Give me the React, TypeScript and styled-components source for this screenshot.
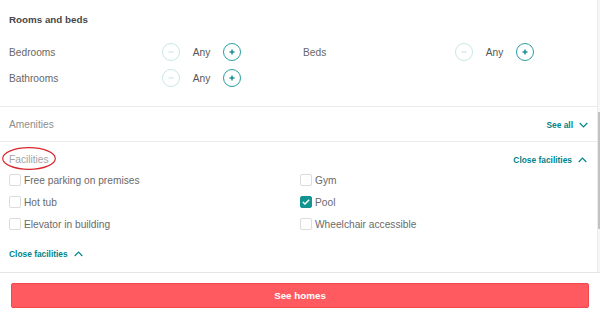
import React from "react";
import styled, { createGlobalStyle } from "styled-components";

const Global = createGlobalStyle`
  html, body { margin: 0; padding: 0; background: #fff; }
  body { font-family: "Liberation Sans", Arial, sans-serif; }
  * { box-sizing: border-box; }
`;

const TEAL = "#008489";

const Page = styled.div`
  width: 600px;
  height: 312px;
  display: flex;
  flex-direction: column;
  overflow: hidden;
  background: #fff;
`;

const ScrollArea = styled.div`
  display: flex;
  height: 272px;
  flex: 0 0 272px;
`;

const Content = styled.div`
  flex: 1;
  display: flex;
  flex-direction: column;
`;

const Track = styled.div`
  width: 5px;
  flex: 0 0 5px;
  background: #f6f6f6;
  border-left: 1px solid #ececec;
  display: flex;
  flex-direction: column;
`;

const Thumb = styled.div`
  margin-top: 112px;
  height: 117px;
  width: 4px;
  background: #c2c2c2;
`;

const RoomsSection = styled.section`
  height: 107px;
  padding: 12px 0 0 9px;
  border-bottom: 1px solid #ebebeb;
`;

const Title = styled.h2`
  margin: 0;
  font-size: 9.8px;
  font-weight: 700;
  line-height: 16px;
  color: #484848;
`;

const Rows = styled.div`
  margin-top: 11px;
  display: flex;
  flex-direction: column;
`;

const Row = styled.div`
  height: 26px;
  display: flex;
  align-items: center;
`;

const Group = styled.div<{ $w?: number }>`
  display: flex;
  align-items: center;
  width: ${(p) => p.$w ?? 294}px;
`;

const Label = styled.span<{ $w: number }>`
  width: ${(p) => p.$w}px;
  font-size: 10.2px;
  color: #676767;
  padding-top: 1px;
`;

const Circle = styled.span<{ $active?: boolean }>`
  width: 18px;
  height: 18px;
  border-radius: 50%;
  border: 1.2px solid ${(p) => (p.$active ? "#2a9ea0" : "#c9e6e6")};
  display: flex;
  align-items: center;
  justify-content: center;
  color: ${(p) => (p.$active ? TEAL : "#c3e2e2")};
`;

const Value = styled.span`
  width: 43px;
  text-align: center;
  font-size: 10.2px;
  color: #555;
  padding-top: 1px;
`;

const AmenitiesSection = styled.section`
  height: 35px;
  padding: 2px 9px 0 9px;
  border-bottom: 1px solid #ebebeb;
  display: flex;
  align-items: center;
  justify-content: space-between;
`;

const SectionName = styled.span<{ $light?: boolean }>`
  font-size: 10.2px;
  line-height: 16px;
  color: ${(p) => (p.$light ? "#a4a4a4" : "#8e8e8e")};
`;

const Link = styled.a`
  display: inline-flex;
  align-items: center;
  gap: 6px;
  font-size: 8.4px;
  font-weight: 700;
  color: ${TEAL};
  text-decoration: none;
  line-height: 14px;
`;

const FacilitiesSection = styled.section`
  flex: 1;
  padding: 10px 10px 0 9px;
`;

const FacHeader = styled.div`
  position: relative;
  height: 16px;
  display: flex;
  align-items: center;
  justify-content: space-between;
`;

const Ellipse = styled.svg`
  position: absolute;
  left: -7px;
  top: -5px;
  overflow: visible;
`;

const Items = styled.div`
  margin-top: 1px;
  display: grid;
  grid-template-columns: 291px 1fr;
  grid-auto-rows: 22px;
`;

const Item = styled.label`
  display: flex;
  align-items: center;
  font-size: 10.2px;
  color: #6a6a6a;
`;

const Box = styled.span<{ $checked?: boolean }>`
  width: 12px;
  height: 12px;
  margin-right: 3px;
  border-radius: 2px;
  border: 1px solid ${(p) => (p.$checked ? "#139490" : "#dcdcdc")};
  background: ${(p) => (p.$checked ? "#139490" : "#fff")};
  display: flex;
  align-items: center;
  justify-content: center;
`;

const BottomLink = styled.div`
  margin-top: 12px;
  display: flex;
`;

const Footer = styled.footer`
  flex: 1;
  border-top: 1px solid #e6e6e6;
  padding: 10px 11px 0 11px;
`;

const Button = styled.button`
  width: 100%;
  height: 25px;
  border-radius: 2px;
  border: 1px solid #f2474d;
  background: #ff5a5f;
  color: #fff;
  font-family: "Liberation Sans", Arial, sans-serif;
  font-weight: 700;
  font-size: 9.8px;
  display: flex;
  align-items: center;
  justify-content: center;
  padding: 0;
`;

const Minus = () => (
  <svg width="6" height="2" viewBox="0 0 6 2">
    <line x1="0.5" y1="1" x2="5.5" y2="1" stroke="currentColor" strokeWidth="1" />
  </svg>
);

const Plus = () => (
  <svg width="6" height="6" viewBox="0 0 6 6">
    <line x1="0.5" y1="3" x2="5.5" y2="3" stroke="currentColor" strokeWidth="1.3" />
    <line x1="3" y1="0.5" x2="3" y2="5.5" stroke="currentColor" strokeWidth="1.3" />
  </svg>
);

const Chevron = ({ up }: { up?: boolean }) => (
  <svg width="9" height="6" viewBox="0 0 9 6">
    <polyline
      points={up ? "0.7,5 4.5,1.2 8.3,5" : "0.7,1 4.5,4.8 8.3,1"}
      fill="none"
      stroke={TEAL}
      strokeWidth="1.2"
    />
  </svg>
);

const Check = () => (
  <svg width="8" height="6" viewBox="0 0 8 6">
    <polyline points="0.8,3 3,5 7.2,0.8" fill="none" stroke="#fff" strokeWidth="1.4" />
  </svg>
);

const Counter = () => (
  <>
    <Circle>
      <Minus />
    </Circle>
    <Value>Any</Value>
    <Circle $active>
      <Plus />
    </Circle>
  </>
);

const facilities: [string, boolean][] = [
  ["Free parking on premises", false],
  ["Gym", false],
  ["Hot tub", false],
  ["Pool", true],
  ["Elevator in building", false],
  ["Wheelchair accessible", false],
];

export default function App() {
  return (
    <Page>
      <Global />
      <ScrollArea>
        <Content>
          <RoomsSection>
            <Title>Rooms and beds</Title>
            <Rows>
              <Row>
                <Group>
                  <Label $w={153}>Bedrooms</Label>
                  <Counter />
                </Group>
                <Group>
                  <Label $w={152}>Beds</Label>
                  <Counter />
                </Group>
              </Row>
              <Row>
                <Group>
                  <Label $w={153}>Bathrooms</Label>
                  <Counter />
                </Group>
              </Row>
            </Rows>
          </RoomsSection>
          <AmenitiesSection>
            <SectionName>Amenities</SectionName>
            <Link>
              See all <Chevron />
            </Link>
          </AmenitiesSection>
          <FacilitiesSection>
            <FacHeader>
              <SectionName $light>Facilities</SectionName>
              <Link>
                Close facilities <Chevron up />
              </Link>
              <Ellipse width="54" height="23" viewBox="0 0 54 23">
                <ellipse cx="27" cy="11.5" rx="26.3" ry="10.8" fill="none" stroke="#d9262c" strokeWidth="1.2" />
              </Ellipse>
            </FacHeader>
            <Items>
              {facilities.map(([name, checked]) => (
                <Item key={name}>
                  <Box $checked={checked}>{checked && <Check />}</Box>
                  {name}
                </Item>
              ))}
            </Items>
            <BottomLink>
              <Link>
                Close facilities <Chevron up />
              </Link>
            </BottomLink>
          </FacilitiesSection>
        </Content>
        <Track>
          <Thumb />
        </Track>
      </ScrollArea>
      <Footer>
        <Button>See homes</Button>
      </Footer>
    </Page>
  );
}
